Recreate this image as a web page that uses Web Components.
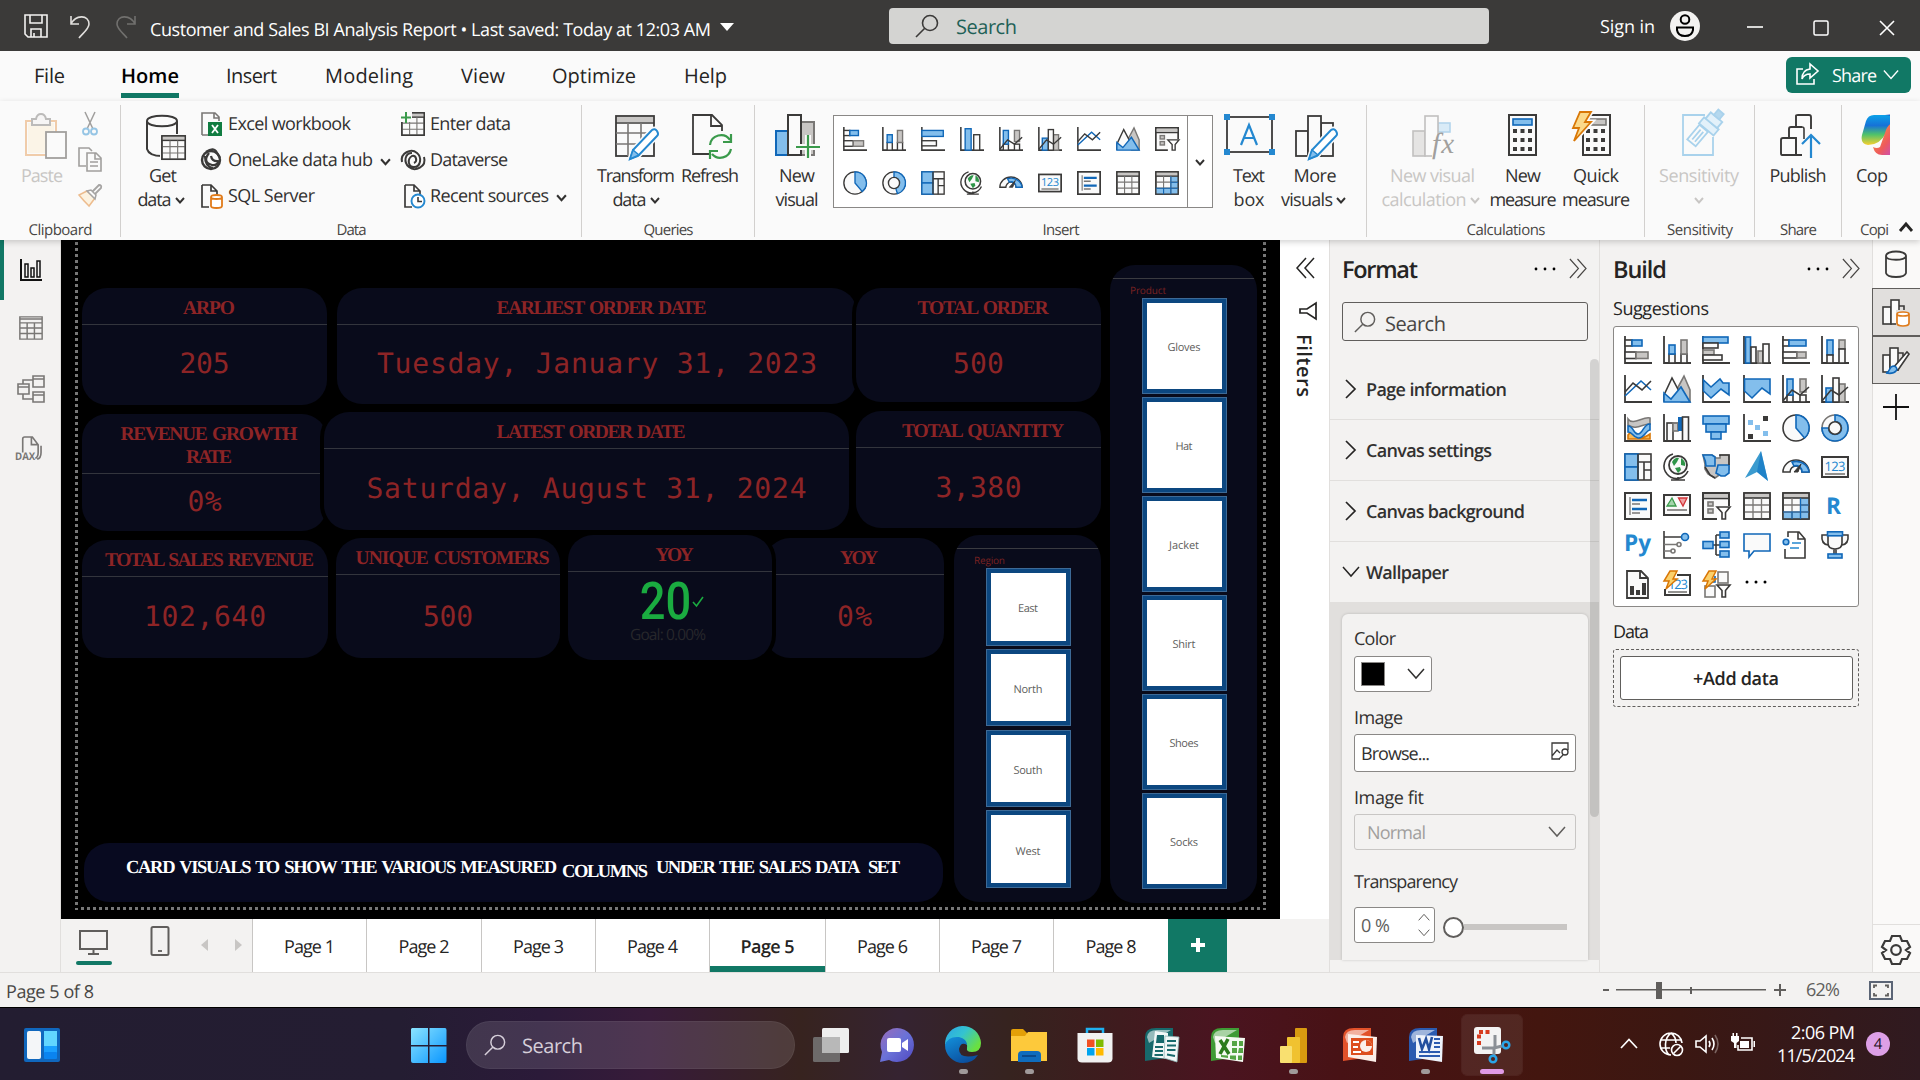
<!DOCTYPE html>
<html lang="en">
<head>
<meta charset="utf-8">
<title>Customer and Sales BI Analysis Report</title>
<style>
html,body{margin:0;padding:0;width:1920px;height:1080px;overflow:hidden;background:#000}
body{font-family:"Open Sans","Noto Sans",sans-serif;font-stretch:92%;font-size:18px;color:#323130;text-rendering:geometricPrecision}
</style>
</head>
<body>
<bi-app></bi-app>
<script>
const K='#3b3a39',BS='#1067b8',BF='#83beec',GS='#797775',GF='#c8c6c4',W='#fafafa';
const R=(x,y,w,h,f='none',s=K,sw=1.6)=>`<rect x="${x}" y="${y}" width="${w}" height="${h}" fill="${f}" stroke="${s}" stroke-width="${sw}"/>`;
const P=(d,s=K,f='none',sw=1.6,x='')=>`<path d="${d}" fill="${f}" stroke="${s}" stroke-width="${sw}" ${x}/>`;
const C=(x,y,r,f='none',s=K,sw=1.6)=>`<circle cx="${x}" cy="${y}" r="${r}" fill="${f}" stroke="${s}" stroke-width="${sw}"/>`;
const AX=P('M1 0V27H28',K,'none',1.8);
const B=(x,y,w,h)=>R(x,y,w,h,BF,BS),G=(x,y,w,h)=>R(x,y,w,h,GF,GS),Wh=(x,y,w,h)=>R(x,y,w,h,W,K);
const grid=(m='')=>`${R(1,1,26,26,W)}${m}<rect x="1.5" y="1.5" width="25" height="4.5" fill="${GF}"/>${P('M1 6H27',K)}${P('M1 13H27M1 20H27M10 6V27M18.5 6V27',GS,'none',1.3)}${R(1,1,26,26)}`;
const BOLT='<path d="M7 1H14L10 9H14L3 19L6 11H1Z" fill="#fbd06b" stroke="#d97706" stroke-width="1.5"/>';
const FUN='<path d="M15 15H28L23.500 20.500V27H20V20.500Z" fill="#fff" stroke="#3b3a39" stroke-width="1.6"/>';
const PEN='<path d="M31 46L34 37L53 17Q56 15 58 18Q60 21 58 23L39 43Z" fill="#fff" stroke="#fafafa" stroke-width="5"/><path d="M31 46L34 37L53 17Q56 15 58 18Q60 21 58 23L39 43Z" fill="#fff" stroke="#2488d0" stroke-width="2"/><path d="M31 46L34 37L40 42Z" fill="#83beec" stroke="#2488d0" stroke-width="1.5"/>';
const pen=x=>`<g transform="translate(${x} 2)">${PEN}</g>`;
const OLD=(c,l)=>`<path d="M1 10Q1 1 12 1H29V30L1 34Z" fill="${c}"/><path d="M3 10Q4 3 13 3H27L5 16Z" fill="#fff" opacity=".55"/>`;
const DOCP=P('M2 1H11L17 7V12M9 23H2V1M11 1V7H17',K,'none',1.7);
const ICONS={
sbar:[28,AX+Wh(1,4,7,6)+B(8,4,10,6)+Wh(1,16,11,6.5)+G(12,16,12,6.500)],
scol:[28,AX+Wh(6,18,6,9)+B(6,9,6,9)+Wh(18,18,6,9)+G(18,4,6,14)],
cbar:[28,AX+B(1,1,25,6)+Wh(1,7,15,5)+G(1,14,11,5)+Wh(1,19,19,5)],
ccol:[28,AX+B(2.5,1,5,26)+Wh(8,11,5,16)+G(15,15,5,12)+Wh(20,8,6,19)],
cbar2:[28,AX+B(1,4,25,7)+Wh(1,16,17,6)],
ccol2:[28,AX+B(6,2,7,25)+Wh(16,9,7,18)],
hbar:[28,AX+Wh(1,4,6,6)+B(7,4,17,6)+Wh(1,16,14,6)+G(15,16,9,6)],
hcol:[28,AX+B(6,4,6,15)+Wh(6,19,6,8)+G(18,4,6,9)+Wh(18,13,6,14)],
line:[28,AX+P('M1 21L17 6L27 15',BS)+P('M1 17L9 8L18 15L27 6')],
area:[28,P('M13 16L21 1L27 15V27H18Z',GS,GF)+P('M1 20L9 3L18 20L10 26H1Z',K,W)+P('M1 18L8 24L18 12L27 27H1Z',BS,BF)],
sarea:[28,AX+P('M1.5 5L9 12L18 4L21 8H27V20L19 14L9 23L1.500 16Z',BS,BF)],
harea:[28,AX+P('M1.5 4H27V19L19 13L9 23L1.500 16Z',BS,BF)],
lscol:[28,AX+Wh(5,20,6,7)+B(5,4,6,16)+Wh(18,20,6,7)+G(18,4,6,13)+P('M1 26L10 15L18 20L27 12')],
lccol:[28,AX+B(5,13,7,14)+G(18,9,6,18)+Wh(12,3,6,24)+P('M1 26L10 15L18 20L27 12')],
ribbon:[28,P('M4 21Q8 15 12 21T26 20V25H4Z','#d97706','#f9b955')+P('M4 5C9 12 19 2 26 4V10C20 9 12 17 4 11Z',GS,GF)+P('M4 12C10 12 9 20 14 20S20 9 26 10V16C22 16 20 25 14 24S9 18 4 18Z',BS,BF)+AX],
water:[28,Wh(4,9,6,18)+G(10,9,5,8)+P('M10 9H15V17',GS)+`<rect x="15" y="3" width="4" height="14" fill="${BS}"/>`+Wh(19.500,3,6,24)+AX],
funnel:[28,B(1,2,26,8)+B(4,10,20,8)+B(9,18,10,7)],
scatter:[28,AX+`<rect x="20" y="2" width="5" height="5" fill="${K}"/><rect x="5" y="20" width="5" height="5" fill="${K}"/><rect x="5" y="6" width="5" height="5" fill="${BF}"/><rect x="12" y="11" width="5" height="5" fill="${BF}"/><rect x="20" y="17" width="5" height="5" fill="${BF}"/>`],
pie:[28,C(14,14,13,W)+P('M14 14V1A13 13 0 0 1 22.500 24Z',BS,BF)],
donut:[28,C(14,14,13,W,GS)+P('M14 1A13 13 0 1 1 1 14H7.500A6.500 6.500 0 1 0 14 7.500Z',BS,BF)+C(14,14,6.2,W)],
donut2:[28,C(14,14,13,W)+P('M14 1A13 13 0 0 1 18 26.500L16 20A6.500 6.500 0 0 0 14 7.500Z',BS,BF)+C(14,14,6.5,W)],
tree:[28,R(1,1,26,26,W)+B(1,1,13,13)+B(1,14,13,13)+P('M14 9H27M20 9V27M20 17H27M14 1V27')],
globe:[28,C(15,12,9,W,K,1.8)+`<path d="M9 9Q12 4 16 5L14 9L11 13ZM18 5Q23 8 22 13L18 12ZM12 15L17 14L18 17L15 20Z" fill="#2e9548"/>`+P('M10 1A12.500 12.500 0 1 0 25 18M15 24V27M8 27H22')],
map:[28,P('M1 2H10L14 5H18V2H27V17L20 20L13 25L6 21L3 16V11Z',GS,GF)+P('M1 2H10L13 4V13H4Q4 8 1 2Z',BS,BF)+P('M27 12V20L23 23H19L14 20L16 12Z',BS,BF)+P('M3 14L8 22L13 25M18 3V2H27V12')],
azure:[28,`<path d="M18 -2L25 28L14 19L2 25Z" fill="#3b9bcf"/><path d="M18 -2L25 28L14 19Z" fill="#1477c4" opacity=".7"/>`],
gauge:[28,P('M1 19A13 12 0 0 1 27 19H20A6 6 0 0 0 8 19Z',K,W)+P('M10 9A13 12 0 0 1 27 19H20A6 6 0 0 0 12 13Z',BS,BF)+P('M12 19L19 11L16 19Z',K,K,1)],
card:[28,R(1,4,26,20,W,K,2)+`<text x="14" y="18" font-size="13" fill="#2488d0" text-anchor="middle" textLength="21" font-family="Open Sans">123</text>`+P('M4 21H24',GS)],
multi:[28,R(1,1,26,26,W,K,2)+P('M6 5V23',GS,'none',1.3)+P('M8 8H23M8 17H23',BS,'none',2.500)+P('M8 12H16M8 21H16',GS,'none',1.6)],
kpi:[28,R(1,3,26,20,W,K,2)+P('M4 14L9 6L13 14Z','#3a9a4b','#a3d5ab',1.3)+P('M15.500 6H24L20 14Z','#d13438','#f0a1a3',1.3)+P('M4 18H24',GS)],
slicer:[28,R(1,1,26,26,W,K,2)+`<rect x="2" y="2" width="24" height="3.500" fill="${GF}"/>`+P('M1 6.500H27')+R(6,10,5,4,GF,GS)+R(6,17,5,4,GF,GS)+'<rect x="15" y="14" width="14" height="15" fill="#fff"/>'+FUN],
table:[28,grid()],
matrix:[28,grid(`<path d="M18.500 6H27V27H1V20H18.500Z" fill="${BF}"/>`)+P('M18.500 6V20H1M18.500 13H27M18.500 20H27M10 20V27M18.500 20V27',BS,'none',1.2)],
r:[28,`<text x="5" y="22" font-size="23" font-weight="700" fill="#2488d0" textLength="15" lengthAdjust="spacingAndGlyphs" font-family="Open Sans">R</text>`],
py:[28,`<text x="0" y="20" font-size="23" font-weight="700" fill="#2488d0" textLength="27" lengthAdjust="spacingAndGlyphs" font-family="Open Sans">Py</text>`],
keyi:[28,P('M1 0V27H28M1 6H18')+C(22,6,3.5,BF,BS)+P('M1 13.500H14M1 20H8',GS)+C(16,13.500,2,W,GS)+C(10,20,2,W,GS)],
decomp:[28,P('M10 14H18M14 4V24M14 4H18M14 24H18')+B(1,10.500,10,7)+B(18,1,9,6)+B(18,10.500,9,6)+B(18,20,9,6)],
qa:[28,P('M1 3H27V20H11L6 26V20H1Z',BS,W)],
narr:[28,P('M6 6V1H17L23 8V27H3V18M16 1V8H23')+C(4,11,2.800,BF,BS)+P('M10 12H19M8 17H17','#2488d0')],
trophy:[28,P('M7 2V12Q7 18 14 18Q21 18 21 12V2ZM7 4H1Q0 13 7 14M21 4H27Q28 13 21 14M13 18V23M15 18V23',K,W)+B(6.500,.8,15,4)+B(7,23,14,4)],
pagin:[28,P('M3 1H17L24 8V28H3ZM16 1V8H24',K,W,1.8)+`<path d="M6 16H10V25H6ZM12 20H16V25H12ZM18 13H22V25H18Z" fill="${K}"/>`],
papps:[28,P('M14 5H27V25H2V19',K,'none',2)+`<text x="15" y="19" font-size="13" fill="#2488d0" text-anchor="middle" textLength="20" font-family="Open Sans">123</text>`+P('M5 22H24',GS)+BOLT],
pauto:[28,R(16,2,10,11,W,GS)+R(3,16,10,11,W,GS)+P('M9 12H13V6',BS,BF)+FUN+BOLT],
dots3:[28,'<circle cx="4" cy="12" r="1.500"/><circle cx="13" cy="12" r="1.500"/><circle cx="22" cy="12" r="1.500"/>'],
/* ribbon 48px */
paste:[48,'<g opacity=".55">'+R(8,10,30,34,'none','#e9a86a',2)+R(11,13,24,28,'#fdf0d8','#fdf0d8',2)+P('M14 14V8H18Q19 3 23 3Q27 3 28 8H32V14Z','#8a8886','#f3f2f1',2)+'</g>'+R(28,21,20,26,W,'#a19f9d',1.8)],
getdata:[48,P('M10 10V38Q12 45 25 45M40 10V25M10 10C10 3 40 3 40 10S10 17 10 10Z',K,'none',2)+'<g transform="translate(24 24)"><rect x="-1" y="-1" width="28" height="27" fill="#fafafa"/>'+`<g transform="scale(.9)">${grid()}</g></g>`],
transform:[48,R(2,5,38,40,W,K,1.800)+`<rect x="3" y="6" width="36" height="5" fill="${GF}"/>`+P('M2 12H40')+P('M2 22H40M2 33H36M14 12V45M27 12V45',GS)+pen(-15)],
refresh:[48,P('M22 43H6V4H25L35 14V20M24 4V15H35',K,'none',1.8)+P('M23 34A11 11 0 0 1 43 29M44 23V31H36M44 38A11 11 0 0 1 25 43M23 48V40H31','#3a9a4b','none',2.200)],
newvis:[48,R(2,20,12,24,BF,BS,2)+R(26,11,14,33,GF,GS,2)+R(14,4,13,40,W,K,2)+P('M34 24V48M22 36H46','#fafafa','none',6)+P('M34 24V47M22 36H46','#3a9a4b','none',2.200)],
textbox:[48,R(2,6,45,35,W,K,1.800)+'<path d="M-1 3H5V9H-1ZM44 3H50V9H44ZM-1 38H5V44H-1ZM44 38H50V44H44Z" fill="#2488d0"/>'+P('M16 34L24 14L32 34M19 27H29','#2488d0','none',2.200)],
morevis:[48,R(3,20,12,25,W,K,1.8)+R(28,12,12,33,W,K,1.8)+R(15,5,13,40,W,K,1.8)+pen(-15)],
newcalc:[48,'<g opacity=".5">'+R(5,20,12,25,'#d2d0ce','#8a8886')+R(30,12,12,9,'#b9ddf5','#6fb1e0')+R(17,5,13,40,W,'#8a8886')+'</g><rect x="24" y="24" width="26" height="24" fill="#fafafa"/><text x="24" y="42" font-size="29" font-style="italic" fill="#a19f9d" font-family="Liberation Serif" textLength="22">fx</text>'],
calc:[48,R(10,4,27,40,W,K,2)+R(14,8,19,6,BF,BS)+'<path d="M14 18h4v4h-4zM21.500 18h4v4h-4zM29 18h4v4h-4zM14 27h4v4h-4zM21.500 27h4v4h-4zM29 27h4v4h-4zM14 36h4v4h-4zM21.500 36h4v4h-4zM29 36h4v4h-4z" fill="#3b3a39"/>'],
quick:[48,R(11,4,27,40,W,K,2)+R(15,8,19,6,GF,GS)+'<path d="M14 18h4v4h-4zM21.500 18h4v4h-4zM29 18h4v4h-4zM14 27h4v4h-4zM21.500 27h4v4h-4zM29 27h4v4h-4zM14 36h4v4h-4zM21.500 36h4v4h-4zM29 36h4v4h-4z" fill="#3b3a39"/><path d="M8 1H19L13 11H19L2 30L7 17H1Z" fill="#fbd98a" stroke="#fafafa" stroke-width="5"/><path d="M8 1H19L13 11H19L2 30L7 17H1Z" fill="#fbd98a" stroke="#d97706" stroke-width="1.800"/>'],
sens:[48,P('M28 4H6V44H36V26','#a9d2ec','none',1.8)+'<g transform="rotate(40 34 12)" fill="#e3f1fa" stroke="#a9d2ec" stroke-width="1.800"><rect x="25" y="12" width="19" height="8"/><rect x="27" y="4" width="15" height="8"/><rect x="31" y="-3" width="7" height="7" fill="#b5d8ee"/></g><g transform="rotate(40 20 26)" fill="none" stroke="#a9d2ec" stroke-width="1.800"><rect x="14" y="15" width="11" height="19"/><path d="M18 18V31M21.500 18V31"/></g>'],
publish:[48,P('M28 44H8Q7 44 7 42V29Q7 27 9 27H22V44M15 27V18Q15 16 17 16H28M22 16V5Q22 4 24 4H35Q37 4 37 6V18',K,'none',1.900)+P('M22 16H28Q30 16 30 18V28M22 27V44H28',K)+P('M37 47V24M28 33L37 24L46 33','#2488d0','none',2.200)],
copilot:[48,'<defs><linearGradient id="a" x1="0" y1="0" x2="0" y2="1"><stop offset="0" stop-color="#0ba1e8"/><stop offset=".35" stop-color="#1672d8"/><stop offset=".65" stop-color="#4fc26b"/><stop offset="1" stop-color="#f8d02e"/></linearGradient><linearGradient id="b" x1="0" y1="0" x2="1" y2="1"><stop offset="0" stop-color="#f9a13a"/><stop offset=".6" stop-color="#ee5a5c"/><stop offset="1" stop-color="#c04bd0"/></linearGradient></defs><path d="M18 4H34Q40 4 40 12L30 22Q24 34 12 34Q4 33 6 24L10 10Q12 4 18 4Z" fill="url(#a)"/><path d="M36 12Q31 14 29 22L24 36Q21 38 17 36Q19 44 26 44H40V20Z" fill="url(#b)"/><path d="M29 4Q38 4 41 12V6L38 3Z" fill="#1a4fc0"/>'],
/* ribbon 24px */
cut:[24,'<g opacity=".8">'+P('M7 1L15 18M17 1L9 18','#8a8886','none',1.500)+C(8,20.500,3,'none','#7db8e0',1.8)+C(16,20.500,3,'none','#7db8e0',1.8)+'</g>'],
copy:[24,P('M8 19H1V1H11L14 4','#a19f9d')+P('M9 6H18L23 11V24H9ZM17 6V12H23M12 15H20M12 19H20','#a19f9d',W)],
brush:[24,'<g opacity=".75">'+P('M14 9L21 2Q24 2 23 5L16 12','#8a8886','none',1.800)+P('M9 8L17 15L11 23Q5 17 1 12Z','#e9a86a','#fdf0d8',1.500)+P('M9 8L17 16L18 12L13 7Z','#8a8886',W,1.500)+'</g>'],
excel:[24,P('M2 23V1H15L19 5V9M14 1V6H19M2 23H8','#797775')+'<rect x="8" y="10" width="14" height="14" fill="#107c41"/>'+P('M12 13L18 21M18 13L12 21','#fff','none',1.8)],
onelake:[24,C(11,12,9,'none',K,2.400)+P('M6 4Q14 -2 17 5L20 10M9 5Q2 14 12 17Q17 18 19 13M11 8Q12 14 19 13M5 8Q5 19 13 20',K,'none',2.200)],
sql:[24,DOCP+P('M11 13V22Q11 24 16.500 24T22 22V13Q22 11 16.500 11T11 13ZM11 13Q11 15 16.500 15T22 13','#e07b1a','#fff',1.8)],
enter:[24,'<g transform="scale(.86)">'+grid()+'</g><rect x="-1" y="-1" width="12" height="11" fill="#fafafa"/>'+P('M5 0V11M0 5.500H10','#3a9a4b','none',2)],
dataverse:[24,P('M1 14C-1 5 10 0 16 5C21 9 20 19 13 19C7 19 6 11 11 8C15 7 17 13 13 15M23 9C26 19 14 24 8 19C2 14 4 5 11 5',K,'none',2)],
recent:[24,'<g transform="translate(2 0)">'+DOCP+'</g>'+C(17,17,6.500,'#fff','#2488d0',1.900)+P('M17 13V17.500H21',K)],
/* misc */
save:[24,P('M1 1H23V23H4L1 20ZM6 1V9H18V1M7 23V15H17V23M10 23V19','#f3f2f1')],
undo:[24,P('M2 1V9H10M2 9C7 -1 20 0 20 9C20 14 13 19 10 23','#e1dfdd')],
redo:[24,P('M22 1V9H14M22 9C17 -1 4 0 4 9C4 14 11 19 14 23','#71706e')],
caret:[14,'<path d="M0 3H14L7 11Z" fill="#fff"/>'],
mag:[24,P('M1 23L9.500 14.500','currentColor')+C(15,9,7.500,'none','currentColor')],
user:[30,'<circle cx="15" cy="15" r="15" fill="#f3f2f1"/>'+C(15,8.500,4.300,'none','#000',2)+P('M7 16.500H23V19Q22 25 15 25T7 19Z','#000','none',2)],
min:[16,P('M0 8H16','#fff')],max:[16,'<rect x="1" y="1" width="14" height="14" rx="1.500" fill="none" stroke="#fff" stroke-width="1.500"/>'],close:[16,P('M1 1L15 15M15 1L1 15','#fff')],
share:[24,P('M7 7H1V22H18V17','#fff')+P('M14 7V2L22 9L14 16V12Q8 12 6 17Q6 8 14 7Z','#fff')],
chev:[10,P('M1 3L5 7.500L9 3','currentColor','none',1.900)],
chevl:[18,P('M1 4L9 13L17 4','currentColor','none',1.5)],
chevr:[18,P('M4 0L13 9L4 18','currentColor','none',1.7)],
chevu:[14,P('M1 11L7 4L13 11','#252423','none',2.800)],
dbl:[20,P('M18 0L9 10L18 20M10 0L1 10L10 20','#252423','none',1.500)],
dbr:[20,P('M2 0L11 10L2 20M10 0L19 10L10 20','#484644','none',1.200)],
dots:[24,'<circle cx="3" cy="12" r="1.400"/><circle cx="12" cy="12" r="1.400"/><circle cx="21" cy="12" r="1.400"/>'],
filt:[18,P('M17 1V17L8 11L1 11V7H8Z','#252423','none',1.7)],
report:[22,P('M1 0V21H22',"#111",'none',2)+P('M5 18V5H8V18ZM11 18V9H14V18ZM17 18V2H20V18Z','#111','none',1.5)],
rtable:[28,P('M1 1H27V27H1ZM1 8H27M1 14H27M1 20.500H27M9.500 8V27M18 8V27M1 3.500H27','#797775','none',1.7)],
model:[28,P('M16 1H27V12H16ZM16 4H27M16 17H27V27H16ZM16 20H27M1 9H12V19H1ZM1 12H12M6 9V5H16M6 19V24H16','#797775','none',1.6)],
dax:[28,P('M8 17V3Q8 1 10 1H18L24 9V17Q24 22 21 23M17 1V9H24M27 10V17Q27 23 23 24','#797775','none',1.7)+'<text x="0" y="25" font-size="11" font-weight="700" fill="#797775" textLength="21" lengthAdjust="spacingAndGlyphs" font-family="Open Sans">DAX</text>'],
db:[28,P('M4 6V23Q5 27 14 27T24 23V6C24 0 4 0 4 6ZM4 6C4 11 24 11 24 6',K,'none',1.800)],
bdata:[28,Wh(1,9,8,17)+Wh(9,2,8,24)+P('M17 8H22V12')+'<rect x="14" y="12" width="14" height="17" fill="#e1dfdd"/>'+P('M15 16V25Q15 28 21 28T27 25V16Q27 14 21 14T15 16ZM15 16Q15 18 21 18T27 16','#e07b1a','#fff',1.7)],
bbrush:[28,Wh(1,9,7,17)+Wh(8,2,8,22)+P('M16 7H21V10')+P('M11 22L25 6L27 8L16 24Z',K,'#fff')+P('M4 27C9 26 6 20 12 20C18 22 14 29 4 27Z',BS,BF)],
plus:[26,P('M13 0V26M0 13H26','#111','none',1.8)],
gear:[30,P('M12.500 6L14 2M15 1H11L9 6L4 6L1 12L5 15L1 18L4 24L9 24L11 29H19L21 24L26 24L29 18L25 15L29 12L26 6L21 6L19 1H15',K,'none',2.200).replace('M12.500 6L14 2M15','M15')+C(15,15,4.800,'none',K,2.200)],
imgs:[18,P('M17 8V1H1V17H9M1 14L6 8L9 11',K,'none',1.300)+C(14,10,3,'none',K,1.300)+P('M12 13L8 17',K,'none',1.300)],
desk:[30,P('M1 2H28V20H1ZM14.500 20V25M9 25H20','#605e5c','none',2)],
phone:[30,'<rect x="6.500" y="1" width="17" height="28" rx="1.500" fill="none" stroke="#605e5c" stroke-width="2"/>'+P('M13 25H17','#605e5c','none',1.800)],
al:[12,'<path d="M8 0V12L1 6Z" fill="#c8c6c4"/>'],ar:[12,'<path d="M4 0V12L11 6Z" fill="#c8c6c4"/>'],
addp:[16,P('M8 1V15M1 8H15','currentColor','none',4)],
zplus:[12,P('M6 0V12M0 6H12','#605e5c','none',2)],
fit:[24,R(1,3,22,17,'none','#5b6576',2)+P('M8 6.500H5V9M16 6.500H19V9M5 14V16.500H8M19 14V16.500H16','#605e5c','none',1.8)],
check:[12,P('M1 6L4.500 10L11 1','#1aab40')],
/* taskbar 36px */
widgets:[36,'<rect width="36" height="34" y="1" rx="2" fill="#1067bd"/><rect x="3" y="4" width="14" height="28" rx="2" fill="#f4f6f8"/><rect x="20" y="4" width="13" height="15" fill="#62d6ff"/><rect x="20" y="19" width="13" height="7" fill="#1aa0ff"/><rect x="20" y="25" width="13" height="7" rx="1" fill="#0a84f0"/>'],
win:[36,'<defs><linearGradient id="w" x1="0" y1="0" x2="1" y2="1"><stop offset="0" stop-color="#8be4ff"/><stop offset="1" stop-color="#0a96ff"/></linearGradient></defs><path d="M1 0H17V17H0V1ZM18.500 0H34Q35.500 0 35.500 2V17H18.500ZM0 18.500H17V35H2Q0 35 0 33ZM18.500 18.500H35.500V33Q35.500 35 34 35H18.500Z" fill="url(#w)"/>'],
task:[36,'<rect x="9" y="1" width="27" height="25" rx="1.500" fill="#eee"/><rect x="0" y="10" width="27" height="25" rx="1.500" fill="#777" opacity=".85"/><rect x="9" y="10" width="18" height="16" fill="#b8b8b8"/>'],
chat:[36,'<defs><linearGradient id="c" x1="0" y1="0" x2="1" y2="1"><stop offset="0" stop-color="#9a6cb8"/><stop offset=".5" stop-color="#6a72d8"/><stop offset="1" stop-color="#5048c0"/></linearGradient></defs><path d="M18 1A17 17 0 1 1 10 33L1 35L3 25A17 17 0 0 1 18 1Z" fill="url(#c)"/><rect x="8" y="11" width="14" height="14" rx="2" fill="#fff"/><path d="M23 16L29 12V24L23 20Z" fill="#fff"/>'],
edge:[36,'<defs><linearGradient id="e" x1="0" y1="0" x2="1" y2=".6"><stop offset="0" stop-color="#2ba4e6"/><stop offset=".5" stop-color="#34c3d0"/><stop offset="1" stop-color="#6ae03f"/></linearGradient><linearGradient id="f" x1="0" y1="0" x2=".6" y2="1"><stop offset="0" stop-color="#1391dc"/><stop offset="1" stop-color="#0b4f9e"/></linearGradient></defs><path d="M0 18A18 18 0 0 1 36 16Q36 25 27 25Q21 25 22 21Q23 16 18 14Q9 10 0 18Z" fill="url(#e)"/><path d="M0 18Q3 9 14 10Q22 12 22 18Q16 14 14 22Q14 33 33 28Q28 36 18 36A18 18 0 0 1 0 18Z" fill="url(#f)"/>'],
folder:[36,'<path d="M0 4Q0 2 2 2H12L16 6V14H0Z" fill="#e3a008"/><path d="M0 9H14L17 5H36V34H0Z" fill="#fdc93b"/><path d="M7 35V28Q7 24 11 24H26Q30 24 30 28V35Z" fill="#0f6cbd"/><path d="M11 29H25" stroke="#0a4a8c" stroke-width="2"/>'],
store:[36,'<path d="M10 9V2H26V9" fill="none" stroke="#1fb1f0" stroke-width="2.500"/><path d="M0.500 6H35.500V32Q35 35.500 31 35.500H5Q1 35.500 .5 32Z" fill="#f1f1f1"/><path d="M10 12.500h7.500v7.500h-7.500z" fill="#f25022"/><path d="M19 12.500h7.500v7.500h-7.500z" fill="#7fba00"/><path d="M10 21h7.500v7.500h-7.500z" fill="#00a4ef"/><path d="M19 21h7.500v7.500h-7.500z" fill="#ffb900"/>'],
pub:[36,OLD('#17696c')+'<path d="M11 4L24 6V32L8 30Z" fill="#f2f7f7"/><path d="M21 9L35 10L33 35L20 31Z" fill="#f2f7f7" stroke="#8fb5b6" stroke-width=".8"/><path d="M13 8H20V16H12Z" fill="#17696c"/><path d="M11 20H19M11 24H19M10.500 28H19M23 14H32M23 18.500H32M23 23H31.500M23 27.500L31 29" stroke="#17696c" stroke-width="2"/>'],
xls:[36,OLD('#3f9b35')+'<path d="M5 9L35 11L33 35L6 31Z" fill="#f5faf2"/><path d="M10 13L19 27M18 12L10 27" stroke="#2c7a1c" stroke-width="3.500"/><path d="M22 14H27V19H22ZM29 14H33V19H29ZM22 21H27V26H22ZM29 21H33V26H28ZM11 28L18 28.500V31L11 30ZM20 28.500H26V33L20 32ZM28 28.500H32V33H28Z" fill="#55a544"/>'],
pbi:[36,'<rect x="19" y="1" width="12" height="35" rx="1" fill="#d99a10"/><rect x="11" y="10" width="13" height="26" rx="1" fill="#f0c230"/><rect x="4" y="19" width="12" height="17" rx="1" fill="#f9e070"/>'],
ppt:[36,OLD('#e2522a')+'<path d="M6 7L35 10L34 35L6 30Z" fill="#fbeee8"/><rect x="9" y="11" width="22" height="17" fill="#dd4f1f"/><circle cx="24" cy="19" r="6" fill="#fbeee8"/><path d="M24 19H30A6 6 0 0 0 24 13Z" fill="#dd4f1f"/><path d="M11 15H17M11 20H16M11 25H19" stroke="#fff" stroke-width="2"/>'],
word:[36,OLD('#2b5bb0')+'<path d="M8 8L35 9L34 35L8 31Z" fill="#eef3fb"/><path d="M11 11L14 22L18 12L21 22L24 10" fill="none" stroke="#234f9e" stroke-width="2.600"/><path d="M26 12H32M26 16H32M26 20H32M11 25H32M11 29H32" stroke="#2b5bb0" stroke-width="1.800"/>'],
snip:[36,'<rect x="0" y="0" width="27" height="27" rx="3" fill="#f3f3f3"/><path d="M5 18V5H18" fill="none" stroke="#d83b1e" stroke-width="4" stroke-dasharray="4 2.500"/><path d="M21 8V21M8 21H20" stroke="#8b9096" stroke-width="3"/><path d="M20 21L20 29M20 21L28 19" stroke="#8b9096" stroke-width="3"/><circle cx="19" cy="32" r="3.300" fill="none" stroke="#2aa5e8" stroke-width="2.500"/><circle cx="32" cy="18" r="3.300" fill="none" stroke="#2aa5e8" stroke-width="2.500"/>'],
up:[18,P('M1 13L9 4.500L17 13','#fff','none',1.7)],
net:[24,P('M12 1A11 11 0 1 0 12 23M12 1A11 11 0 0 1 23 11M12 1C5 6 5 18 10 23M12 1C16 4 17 8 17 11M2 8H22M2 16H11','#fff','none',1.600)+C(18,18,5.500,'none','#fff')+P('M14.500 21.500L21.500 14.500','#fff')],
vol:[24,P('M1 9H5L11 4V20L5 15H1Z','#fff')+P('M14 9Q16 12 14 15M17 6Q21 12 17 18','#fff')+P('M20 3Q26 12 20 21','#7a6360')],
bat:[24,P('M10 6H21V18H7V13','#fff')+'<path d="M22.500 9H24V15H22.500Z" fill="#fff"/><path d="M9 9H18V16H9Z" fill="#fff"/><path d="M0 4H8V9L5.500 11V16H3V11L0 9ZM1.500 1H3V4H1.500ZM5 1H6.500V4H5Z" fill="#fff"/>'],
};
const FIT=[];
/* Text run with a measured width: letter spacing is adjusted to the w attribute. */
class TX extends HTMLElement{
  constructor(){super();this.attachShadow({mode:'open'}).innerHTML='<style>:host{display:inline-block;white-space:pre;flex:none;transform:translateY(var(--dy,0px))}</style><slot></slot>';}
  connectedCallback(){FIT.push(this)}
  fit(){const w=+this.getAttribute('w');if(!w)return;const n=this.textContent.length;const v=this.classList.contains('v');
    const r=this.getBoundingClientRect(),nat=v?r.height:r.width;if(!nat)return;const s=(w-nat)/Math.max(1,n-1);
    this.style.letterSpacing=s+'px';this.style[v?'marginBottom':'marginRight']=-s+'px';}
}
class IC extends HTMLElement{
  constructor(){super();this.attachShadow({mode:'open'})}
  connectedCallback(){const [b,s]=ICONS[this.getAttribute('n')],z=this.getAttribute('s')||b;
    this.shadowRoot.innerHTML=`<style>:host{display:block;flex:none;width:${z}px;height:${z}px}svg{display:block;overflow:visible}</style><svg width="${z}" height="${z}" viewBox="0 0 ${b} ${b}">${s}</svg>`}
}
const def=(n,css,html)=>customElements.define(n,class extends HTMLElement{
  constructor(){super();this.attachShadow({mode:'open'})}
  connectedCallback(){this.shadowRoot.innerHTML=`<style>*{box-sizing:border-box}${css}</style>${typeof html=='function'?html(this):html}`}});
const T=(t,w,st='',c='')=>`<t-x w="${w}" style="${st}" class="${c}">${t}</t-x>`;
const I=(n,s='',st='')=>`<i-c n="${n}" ${s?`s="${s}"`:''} style="${st}"></i-c>`;
customElements.define('t-x',TX);customElements.define('i-c',IC);

def('title-bar',`:host{display:flex;height:51px;background:#3b3a39;color:#fff;align-items:flex-start;--dy:1px}
.s{display:flex;width:600px;height:36px;margin:8px 0 0 155px;background:#d4d4d2;border-radius:4px;align-items:center;color:#1f6157;font-size:20px}`,
`${I('save','','margin:14px 0 0 24px')}${I('undo','','margin:15px 0 0 21px')}${I('redo','','margin:15px 0 0 20px;')}
${T('Customer and Sales BI Analysis Report • Last saved: Today at 12:03 AM',561,'margin-left:13px;line-height:58px;font-size:18px')}
${I('caret','','margin:20px 0 0 9px')}
<div class="s">${I('mag','','margin-left:26px;color:#3b3a39')}${T('Search',61,'margin-left:17px;line-height:36px')}</div>
${T('Sign in',55,'margin-left:111px;line-height:53px;font-size:18px')}${I('user','','margin:11px 0 0 15px')}
${I('min','','margin:19px 0 0 47px')}${I('max','','margin:20px 0 0 50px')}${I('close','','margin:20px 0 0 50px')}`);

def('menu-bar',`:host{display:flex;height:50px;background:#fafafa;color:#252423;font-size:20px;--dy:1px}
span{height:47px;line-height:47px;display:block}.a{font-weight:600;color:#000;box-shadow:inset 0 -5px #117865}
.b{margin:6px 9px 0 auto;width:125px;height:36px;border-radius:6px;background:#117865;color:#fff;display:flex;align-items:center;font-size:18px}`,
()=>[['File',34,31],['Home',56,58],['Insert',47,51],['Modeling',48,88],['View',48,44],['Optimize',47,84],['Help',48,43]].map(([t,m,w])=>`<span class="${t=='Home'?'a':''}" style="margin-left:${m}px">${T(t,w)}</span>`).join('')+
`<div class="b">${I('share','','margin:-3px 0 0 10px')}${T('Share',45,'margin-left:12px;margin-top:0')}${I('chevl',16,'margin-left:6px')}</div>`);

def('ribbon-button',`:host{display:flex;flex-direction:column;align-items:center;padding-top:10px;flex:none;line-height:24px;--dy:.5px}
i-c{margin-bottom:4px}div{display:flex;height:24px;align-items:center;gap:3px}div i-c{margin:2px 0 0}`,
e=>{const l=e.getAttribute('l').split('|').map(s=>s.split('~'));
 return I(e.getAttribute('i'),'',`transform:translateX(${e.getAttribute('dx')||0}px)`)+l.map(([t,w,c,o])=>`<div style="margin-left:${o||0}px">${t?T(t,w):''}${c>0?I('chev'):''}</div>`).join('')});
def('ribbon-group',`:host{display:flex;flex-direction:column;height:139px;flex:none;overflow:hidden;position:relative}
:host::after{content:"";position:absolute;right:0;top:4px;height:132px;width:1px;background:#d2d0ce}:host([last])::after{display:none}
.b{flex:1;display:flex;min-height:0}.l{height:21px;line-height:20px;text-align:center;font-size:15px;color:#484644;--dy:1px}`,
e=>`<div class="b"><slot></slot></div><div class="l" style="${e.getAttribute('ls')||''}">${T(e.getAttribute('t'),e.getAttribute('lw'))}</div>`);
def('ribbon-row',`:host{display:flex;align-items:center;height:36px}`,
e=>`${I(e.getAttribute('i'))}${T(e.textContent,e.getAttribute('w'),`margin-left:${e.getAttribute('g')||5}px`)}${e.hasAttribute('c')?I('chev',11,'margin:3px 0 0 7px'):''}`);
const BB=(i,l,w,m=0,dx=0,st='')=>`<ribbon-button i="${i}" l="${l}" dx="${dx}" style="width:${w}px;margin-left:${m}px;${st}"></ribbon-button>`;
const RR=(i,t,w,c='',g=5)=>`<ribbon-row i="${i}" w="${w}" g="${g}" ${c}>${t}</ribbon-row>`;
def('visual-gallery',`:host{display:flex;width:380px;height:93px;margin:14px 0 0 4px;background:#fff;border:1.500px solid #8a8886}
.g{display:grid;grid-template-columns:repeat(9,24px);column-gap:15px;row-gap:20px;padding:11px 0 0 9px;width:354px;align-content:start}
.c{border-left:1px solid #8a8886;width:25px;display:flex;align-items:center;justify-content:center}`,
()=>`<div class="g">${'sbar scol cbar2 ccol2 lscol lccol line area slicer pie donut2 tree globe gauge card multi table matrix'.split(' ').map(n=>I(n,24)).join('')}</div><div class="c">${I('chev')}</div>`);
def('ribbon-bar',`:host{display:flex;height:139px;background:#fafafa;position:relative;z-index:3;box-shadow:0 2px 6px rgba(0,0,0,.18);font-size:18px}
.col{display:flex;flex-direction:column}`,
`<ribbon-group t="Clipboard" lw="64" style="width:121px">${BB('paste','Paste~42',60,12,0,'color:#c8c6c4')}<div class="col" style="margin:10px 0 0 6px;gap:12px">${I('cut')}${I('copy')}${I('brush')}</div></ribbon-group>
<ribbon-group t="Data" lw="30" style="width:461px">${BB('getdata','Get~28~0~4|data~34~1',70,5,0)}<div class="col" style="margin:5px 0 0 4px;width:201px">${RR('excel','Excel workbook',123,'',4)}${RR('onelake','OneLake data hub',145,'c',4)}${RR('sql','SQL Server',87,'',4)}</div><div class="col" style="margin-top:5px">${RR('enter','Enter data',81)}${RR('dataverse','Dataverse',78)}${RR('recent','Recent sources',119,'c')}</div></ribbon-group>
<ribbon-group t="Queries" lw="50" style="width:173px">${BB('transform','Transform~78|data~34~1',84,12,2)}${BB('refresh','Refresh~58',64,0,1)}</ribbon-group>
<ribbon-group t="Insert" lw="37" style="width:612px">${BB('newvis','New~36|visual~43',64,10,1)}<visual-gallery></visual-gallery>${BB('textbox','Text~32|box~31',56,8,0)}${BB('morevis','More~43|visuals~52~1~-3',76,0,2)}</ribbon-group>
<ribbon-group t="Calculations" lw="79" style="width:278px">${BB('newcalc','New visual~85~0~1|calculation~85~1~-3',104,13,0,'color:#c8c6c4')}${BB('calc','New~36|measure~67',70,4,0)}${BB('quick','Quick~46|measure~68',74,1,0)}</ribbon-group>
<ribbon-group t="Sensitivity" lw="66" style="width:110px">${BB('sens','Sensitivity~80|~0~1',90,9,2,'color:#c8c6c4')}</ribbon-group>
<ribbon-group t="Share" lw="37" style="width:87px">${BB('publish','Publish~57',70,8,0)}</ribbon-group>
<ribbon-group last t="Copi" lw="29" ls="text-align:left;padding-left:18px" style="width:48px">${BB('copilot','Cop~32',34,14,0,'align-items:flex-start')}</ribbon-group>
${I('chevu','','margin:119px 0 0 9px')}`);

def('nav-rail',`:host{display:flex;flex-direction:column;width:61px;background:#f3f2f1;border-right:1px solid #e1dfdd}
div{height:60px;display:flex;align-items:center;justify-content:center;flex:none}.a{border-left:4px solid #117865;padding-right:3px}`,
`<div class="a">${I('report',22)}</div><div>${I('rtable',24,'margin:-5px 0 0 1px')}</div><div>${I('model',28,'margin:-3px 0 0 2px')}</div><div>${I('dax',27,'margin:-2px 3px 0 0')}</div>`);

/* Card visual on the report canvas; x/y/w/h are its place on the free canvas. */
def('card-visual',`:host{display:block;position:absolute;background:#090b1b;border-radius:25px;box-shadow:0 0 0 4px #000;text-align:center;overflow:hidden;color:#8d2426}
.t{padding:8.500px 0 4.500px 9px;font:bold 19.500px/23px "Liberation Serif",serif;word-spacing:2px;border-bottom:1.500px solid #33353d}
.v{font:28px/30px "DejaVu Sans Mono",monospace}`,
e=>{const a=n=>e.getAttribute(n);return `<div class="t">${a('t').split('|').map(s=>{const[q,w]=s.split('~');return `<div>${T(q,w)}</div>`}).join('')}</div>${a('v')?`<div class="v" style="margin-top:${+a('m')+1.5}px">${T(a('v'),a('vw'))}</div>`:'<slot></slot>'}`});
const CV=(x,y,w,h,t,v,vw,m,z=1,inner='')=>`<card-visual style="left:${x}px;top:${y}px;width:${w}px;height:${h}px;z-index:${z}" t="${t}" v="${v}" vw="${vw}" m="${m}">${inner}</card-visual>`;
def('slicer-visual',`:host{display:block;position:absolute;width:147px;background:#090b1b;border-radius:25px;overflow:hidden;color:#7c2222}
.h{height:14px;border-bottom:1.500px solid #3a3b40}.n{font-size:10px;line-height:12px;height:19px;padding:5px 0 0 20px}
.c{display:flex;flex-direction:column;gap:3.300px;align-items:center;padding-left:1px;--dy:1.500px}
.i{width:85px;border:5px solid #0c4780;background:#fff;color:#605e5c;font-size:11px;display:flex;align-items:center;justify-content:center;outline:1px solid #3d6a96;outline-offset:-1px}`,
e=>`<div class="h"></div><div class="n">${T(e.getAttribute('t'),e.getAttribute('tw'))}</div><div class="c">${e.getAttribute('i').split(',').map(s=>{const[q,w]=s.split('~');return `<div class="i" style="height:${e.getAttribute('ih')}px">${T(q,w)}</div>`}).join('')}</div>`);
/* Report page: visuals sit at free positions inside the page. */
def('report-canvas',`:host{display:block;position:relative;width:1219px;height:679px;background:#000;overflow:hidden}
.d{position:absolute;left:14px;top:0;width:1191px;height:670px;background:
repeating-linear-gradient(180deg,#000 0 2px,#777 2px 5px,#000 5px 6px) left/3px 100% no-repeat,
repeating-linear-gradient(180deg,#000 0 2px,#777 2px 5px,#000 5px 6px) right/3px 100% no-repeat,
repeating-linear-gradient(90deg,#777 0 3px,#000 3px 6px) bottom/100% 3px no-repeat}
.w{position:absolute;left:0;top:0;transform:translate(-61px,-240px)}
.bn{position:absolute;left:84px;top:843px;width:859px;height:59px;border-radius:25px;background:#080a20;color:#fff;font:bold 18.500px/50px "Liberation Serif",serif;word-spacing:2px;display:flex;padding-left:42px}`,
`<div class="d"></div><div class="w">
${CV(82,288,245,117,'ARPO~52','205',50,22)}
${CV(337,288,520,116,'EARLIEST ORDER DATE~210','Tuesday, January 31, 2023',440,22)}
${CV(856,288,245,114,'TOTAL ORDER~131','500',51,22,2)}
${CV(82,414,245,117,'REVENUE GROWTH~177|RATE~46','0%',34,11.5)}
${CV(324,412,525,118,'LATEST ORDER DATE~189','Saturday, August 31, 2024',440,23,2)}
${CV(856,411,245,117,'TOTAL QUANTITY~162','3,380',86,23,2)}
${CV(82,540,246,118,'TOTAL SALES REVENUE~209','102,640',122,23)}
${CV(336,538,224,120,'UNIQUE CUSTOMERS~194','500',50,25)}
${CV(765,538,179,120,'YOY~38','0%',35,25)}
${CV(568,535,204,125,'YOY~38','','','',3,`<div style="display:flex;justify-content:center;color:#1aab40;margin-top:8px;font:500 52px/44px Roboto,sans-serif;height:44px;padding-right:4px"><t-x style="transform:scaleX(.87);transform-origin:100% 50%">20</t-x><i-c n="check" style="margin:16px 0 0 1px"></i-c></div><div style="color:#27272b;font-size:15.500px;line-height:20px;height:20px;padding-right:4px"><t-x w="76">Goal: 0.00%</t-x></div>`)}
<slicer-visual t="Product" tw="36" i="Gloves~33,Hat~17,Jacket~30,Shirt~23,Shoes~29,Socks~28" ih="95.700" style="left:1110px;top:265px;height:638px"></slicer-visual>
<slicer-visual t="Region" tw="31" i="East~20,North~29,South~29,West~25" ih="77.500" style="left:954px;top:535px;height:367px"></slicer-visual>
<div class="bn">${T('CARD VISUALS TO SHOW THE VARIOUS MEASURED',431)}${T('COLUMNS',86,'margin-left:5px;padding-top:4px')}${T('UNDER THE SALES DATA  SET',244,'margin-left:8px')}</div>
</div>`);

def('page-tabs',`:host{display:flex;height:53px;background:#f3f2f1;font-size:18px;color:#252423;--dy:1px}
.v{display:flex;flex-direction:column;align-items:center;width:36px}.u{width:36px;height:4px;border-radius:2px;background:#117865}
.p{background:#fff;border-left:1.500px solid #c8c6c4;display:flex;justify-content:center;line-height:54px;height:53px}
.p.a{font-weight:600;box-shadow:inset 0 -6px #117865}.n{width:59px;background:#117865;color:#fff;display:flex;align-items:center;justify-content:center;padding-bottom:2px}`,
()=>`<div class="v" style="margin-left:15px">${I('desk',30,'margin:10px 0 2px 0')}<div class="u"></div></div>${I('phone',30,'margin:7px 0 0 33px')}${I('al',12,'margin:20px 0 0 25px')}${I('ar',12,'margin:20px 0 0 19px')}<div style="width:9px"></div>`+
[114,115,114,114,116,114,114,115].map((w,i)=>`<div class="p ${i==4?'a':''}" style="width:${w}px">${T('Page '+(i+1),i==4?54:51)}</div>`).join('')+`<div class="n">${I('addp')}</div>`);

def('filters-pane',`:host{display:flex;flex-direction:column;width:49px;height:679px;background:#fff;align-items:center}
.v{writing-mode:vertical-rl;font-weight:600;font-size:20px;line-height:24px;color:#252423;margin-top:14px;margin-right:1px}`,
`${I('dbl','','margin:18px 0 0 2px')}${I('filt','','margin:24px 0 0 7px')}${T('Filters',63,'','v')}`);

def('pane-header',`:host{display:flex;height:59px;align-items:center;color:#252423;padding-bottom:2px;box-sizing:border-box}`,
e=>`${T(e.getAttribute('t'),e.getAttribute('w'),'font-size:23.500px;font-weight:600;flex:none')}<div style="flex:1"></div>${I('dots',24,'margin-right:-1px')}${I('dbr',19,'margin:0 12px 0 12px')}`);
def('format-section',`:host{display:flex;height:61px;align-items:center;border-bottom:1.500px solid #e1dfdd;font-weight:600;font-size:18px;padding-left:12px;color:#323130}`,
e=>`${I(e.hasAttribute('open')?'chevl':'chevr','','color:#252423;margin-right:6px')}${T(e.getAttribute('t'),e.getAttribute('w'))}`);
def('format-pane',`:host{display:flex;flex-direction:column;width:271px;height:732px;background:#f3f2f1;border-left:1px solid #e1dfdd;border-right:1px solid #e1dfdd;position:relative;--dy:1px}
.s{display:flex;margin:3px 11px 18px 12px;height:39px;border:1.500px solid #605e5c;border-radius:3px;align-items:center;font-size:20px;color:#484644;flex:none}
.g{background:#e1dfdd;height:357px;padding:11px 11px 0 12px}.k{background:#f3f2f1;border-radius:6px 6px 0 0;height:346px;padding:11px 12px 0;display:flex;flex-direction:column;box-shadow:0 0 3px rgba(0,0,0,.18)}
.f{border:1.500px solid #8a8886;border-radius:3px;background:#fff;display:flex;align-items:center;flex:none}
.l{line-height:26px;height:26px;flex:none}
.bar{position:absolute;right:0;top:119px;width:9px;height:458px;border-radius:5px;background:rgba(0,0,0,.13)}
.m{border:2px solid #605e5c;background:#fff;border-radius:50%;width:21px;height:21px}`,
`<pane-header t="Format" w="76" style="padding-left:12px;--dy:0px"></pane-header><div class="s">${I('mag',22,'margin-left:11px;color:#605e5c')}${T('Search',61,'margin:2px 0 0 9px')}</div>
<format-section t="Page information" w="141"></format-section><format-section t="Canvas settings" w="126"></format-section><format-section t="Canvas background" w="159"></format-section><format-section open t="Wallpaper" w="83"></format-section>
<div class="g"><div class="k"><div class="l">${T('Color',42)}</div>
<div class="f" style="width:78px;height:36px;margin-top:5px"><div style="width:24px;height:24px;background:#000;border:1px solid #8a8886;margin-left:6px"></div>${I('chevl','','margin-left:22px')}</div>
<div class="l" style="margin-top:12px;--dy:.5px">${T('Image',49)}</div>
<div class="f" style="height:38px;margin-top:4px">${T('Browse...',69,'margin-left:6px')}${I('imgs','','margin:-4px 6px 0 auto')}</div>
<div class="l" style="margin-top:12px;--dy:.5px">${T('Image fit',70)}</div>
<div class="f" style="height:36px;margin-top:4px;background:#f3f2f1;border-color:#c8c6c4;color:#a19f9d">${T('Normal',59,'margin-left:12px')}${I('chevl','','margin:0 9px 0 auto;color:#605e5c')}</div>
<div class="l" style="margin-top:18px;--dy:.5px">${T('Transparency',104)}</div>
<div style="display:flex;align-items:center;margin-top:13px"><div class="f" style="width:81px;height:36px;color:#605e5c">${T('0 %',29,'margin-left:6px')}<div style="margin-left:28px;display:flex;flex-direction:column;gap:4px">${I('chevl',12,'transform:rotate(180deg)')}${I('chevl',12)}</div></div>
<div class="m" style="margin-left:8px;margin-top:4px;flex:none"></div><div style="width:103px;height:6px;background:#c8c6c4;margin-top:4px;flex:none"></div></div>
</div></div><div class="bar"></div>`);

def('build-pane',`:host{display:flex;flex-direction:column;width:271px;height:732px;background:#f3f2f1;font-size:18px;color:#252423}
.g{margin:0 13px;height:281px;border:1.500px solid #8a8886;border-radius:3px;background:#fff;display:grid;grid-template-columns:28px 28px 29px 28px 28px 28px;column-gap:11.200px;grid-auto-rows:28px;row-gap:11px;padding:9px 0 0 10px;align-content:start}
.d{margin:0 13px;height:58px;border:1.500px dashed #605e5c;border-radius:3px;padding:5.500px;--dy:1px}
.b{height:44px;border:1.500px solid #605e5c;border-radius:3px;background:#fff;display:flex;align-items:center;justify-content:center;font-weight:600}`,
()=>`<pane-header t="Build" w="54" style="padding-left:13px"></pane-header><div style="padding-left:13px;height:27px;line-height:20px">${T('Suggestions',96)}</div>
<div class="g">${'sbar scol cbar ccol hbar hcol line area sarea harea lscol lccol ribbon water funnel scatter pie donut tree globe map azure gauge card multi kpi slicer table matrix r py keyi decomp qa narr trophy pagin papps pauto dots3'.split(' ').map(n=>I(n,28)).join('')}</div>
<div style="padding-left:13px;height:42px;line-height:48px;--dy:1px">${T('Data',36)}</div><div class="d"><div class="b">${T('+Add data',86)}</div></div>`);

def('pane-switcher',`:host{display:flex;flex-direction:column;width:48px;height:732px;background:#faf9f8;border-left:1px solid #e1dfdd;align-items:center}
.b{width:49px;height:48.500px;background:#e1dfdd;border:1.500px solid #605e5c;display:flex;align-items:center;justify-content:center;margin-top:-.5px;padding-right:2px;flex:none}.x{margin-top:auto;border-top:1px solid #e1dfdd;width:48px;height:48px;display:flex;align-items:center;justify-content:center;padding:2px 2px 0 0}`,
`${I('db',28,'margin:10px 2px 10px 0')}<div class="b">${I('bdata')}</div><div class="b">${I('bbrush')}</div>${I('plus','','margin:10px 2px 0 0')}<div class="x">${I('gear')}</div>`);

def('status-bar',`:host{display:flex;height:36px;background:#f3f2f1;border-top:1.500px solid #e1dfdd;border-bottom:1.500px solid #000;font-size:18px;color:#484644;align-items:center}
.z{display:flex;align-items:center;width:150px;height:18px;margin-left:7px;background:linear-gradient(#605e5c,#605e5c) 0 50%/100% 1.500px no-repeat}`,
`${T('Page 5 of 8',88,'margin-left:6px;--dy:1.5px')}<div style="width:6px;height:2px;background:#605e5c;margin-left:1509px"></div><div class="z"><div style="width:6px;height:17px;background:#605e5c;margin-left:40px"></div><div style="width:2px;height:7px;background:#605e5c;margin-left:28px"></div></div>
${I('zplus',12,'margin-left:8px')}${T('62%',34,'margin-left:20px;color:#605e5c')}${I('fit',24,'margin:2px 0 0 29px')}`);

def('task-bar',`:host{display:flex;height:72px;align-items:flex-start;color:#fff;background:linear-gradient(90deg,#231d31 0,#241d32 400px,#2b1a39 540px,#371b39 650px,#37231f 800px,#352331 900px,#36231f 1010px,#3f1b1e 1120px,#4a1420 1220px,#481215 1340px,#43160f 1540px,#3b1712 1680px,#301a20 1920px)}
.s{width:329px;height:48px;border-radius:24px;background:rgba(255,255,255,.12);margin:13px 0 0 19px;display:flex;align-items:center;color:#d6cfda;font-size:20px;border:1px solid rgba(255,255,255,.05)}
.a{display:flex;flex-direction:column;align-items:center;width:60px;height:60px;margin:7px 0 0 6.100px;padding-top:12px;border-radius:5px;flex:none}
u{width:9px;height:5px;border-radius:3px;background:#a09a9a;margin-top:6px;opacity:0}.r u{opacity:1}
.on{background:rgba(255,255,255,.08);outline:1px solid rgba(255,255,255,.06)}.on u{width:24px;background:#e09ae6;opacity:1}
.t{font-size:18px;line-height:23px;display:flex;flex-direction:column;align-items:flex-end;margin:14px 0 0 22px}
.n{width:24px;height:24px;border-radius:50%;background:#dd9fe6;color:#1b1020;font-size:15px;display:flex;align-items:center;justify-content:center;margin:24px 0 0 11px}`,
()=>`${I('widgets','','margin:19px 0 0 24px')}${I('win','','margin:20px 0 0 351px')}<div class="s">${I('mag',22,'margin-left:18px;transform:translateX(-1px)')}${T('Search',61,'margin-left:15px')}</div>`+
[['task'],['chat'],['edge',1],['folder',1],['store'],['pub'],['xls'],['pbi',1],['ppt'],['word',1],['snip',0,1]].map(([n,r,o])=>`<div class="a ${r?'r':''} ${o?'on':''}">${I(n,36)}<u></u></div>`).join('')+
`${I('up','','margin:27px 0 0 98px')}${I('net','','margin:24px 0 0 21px')}${I('vol','','margin:24px 0 0 12px')}${I('bat','','margin:24px 0 0 12px')}
<div class="t">${T('2:06 PM',64)}${T('11/5/2024',78)}</div><div class="n"><t-x>4</t-x></div>`);

def('bi-app',`:host{display:flex;flex-direction:column;width:1920px;height:1080px}.m{display:flex;height:732px;background:#f3f2f1}.c{display:flex;flex-direction:column;width:1219px}.f{width:49px;background:#f3f2f1}`,
`<title-bar></title-bar><menu-bar></menu-bar><ribbon-bar></ribbon-bar>
<div class="m"><nav-rail></nav-rail><div class="c"><report-canvas></report-canvas><page-tabs></page-tabs></div><div class="f"><filters-pane></filters-pane></div><format-pane></format-pane><build-pane style="flex:1"></build-pane><pane-switcher></pane-switcher></div>
<status-bar></status-bar><task-bar></task-bar>`);
FIT.forEach(e=>e.isConnected&&e.fit());
</script>
</body>
</html>
